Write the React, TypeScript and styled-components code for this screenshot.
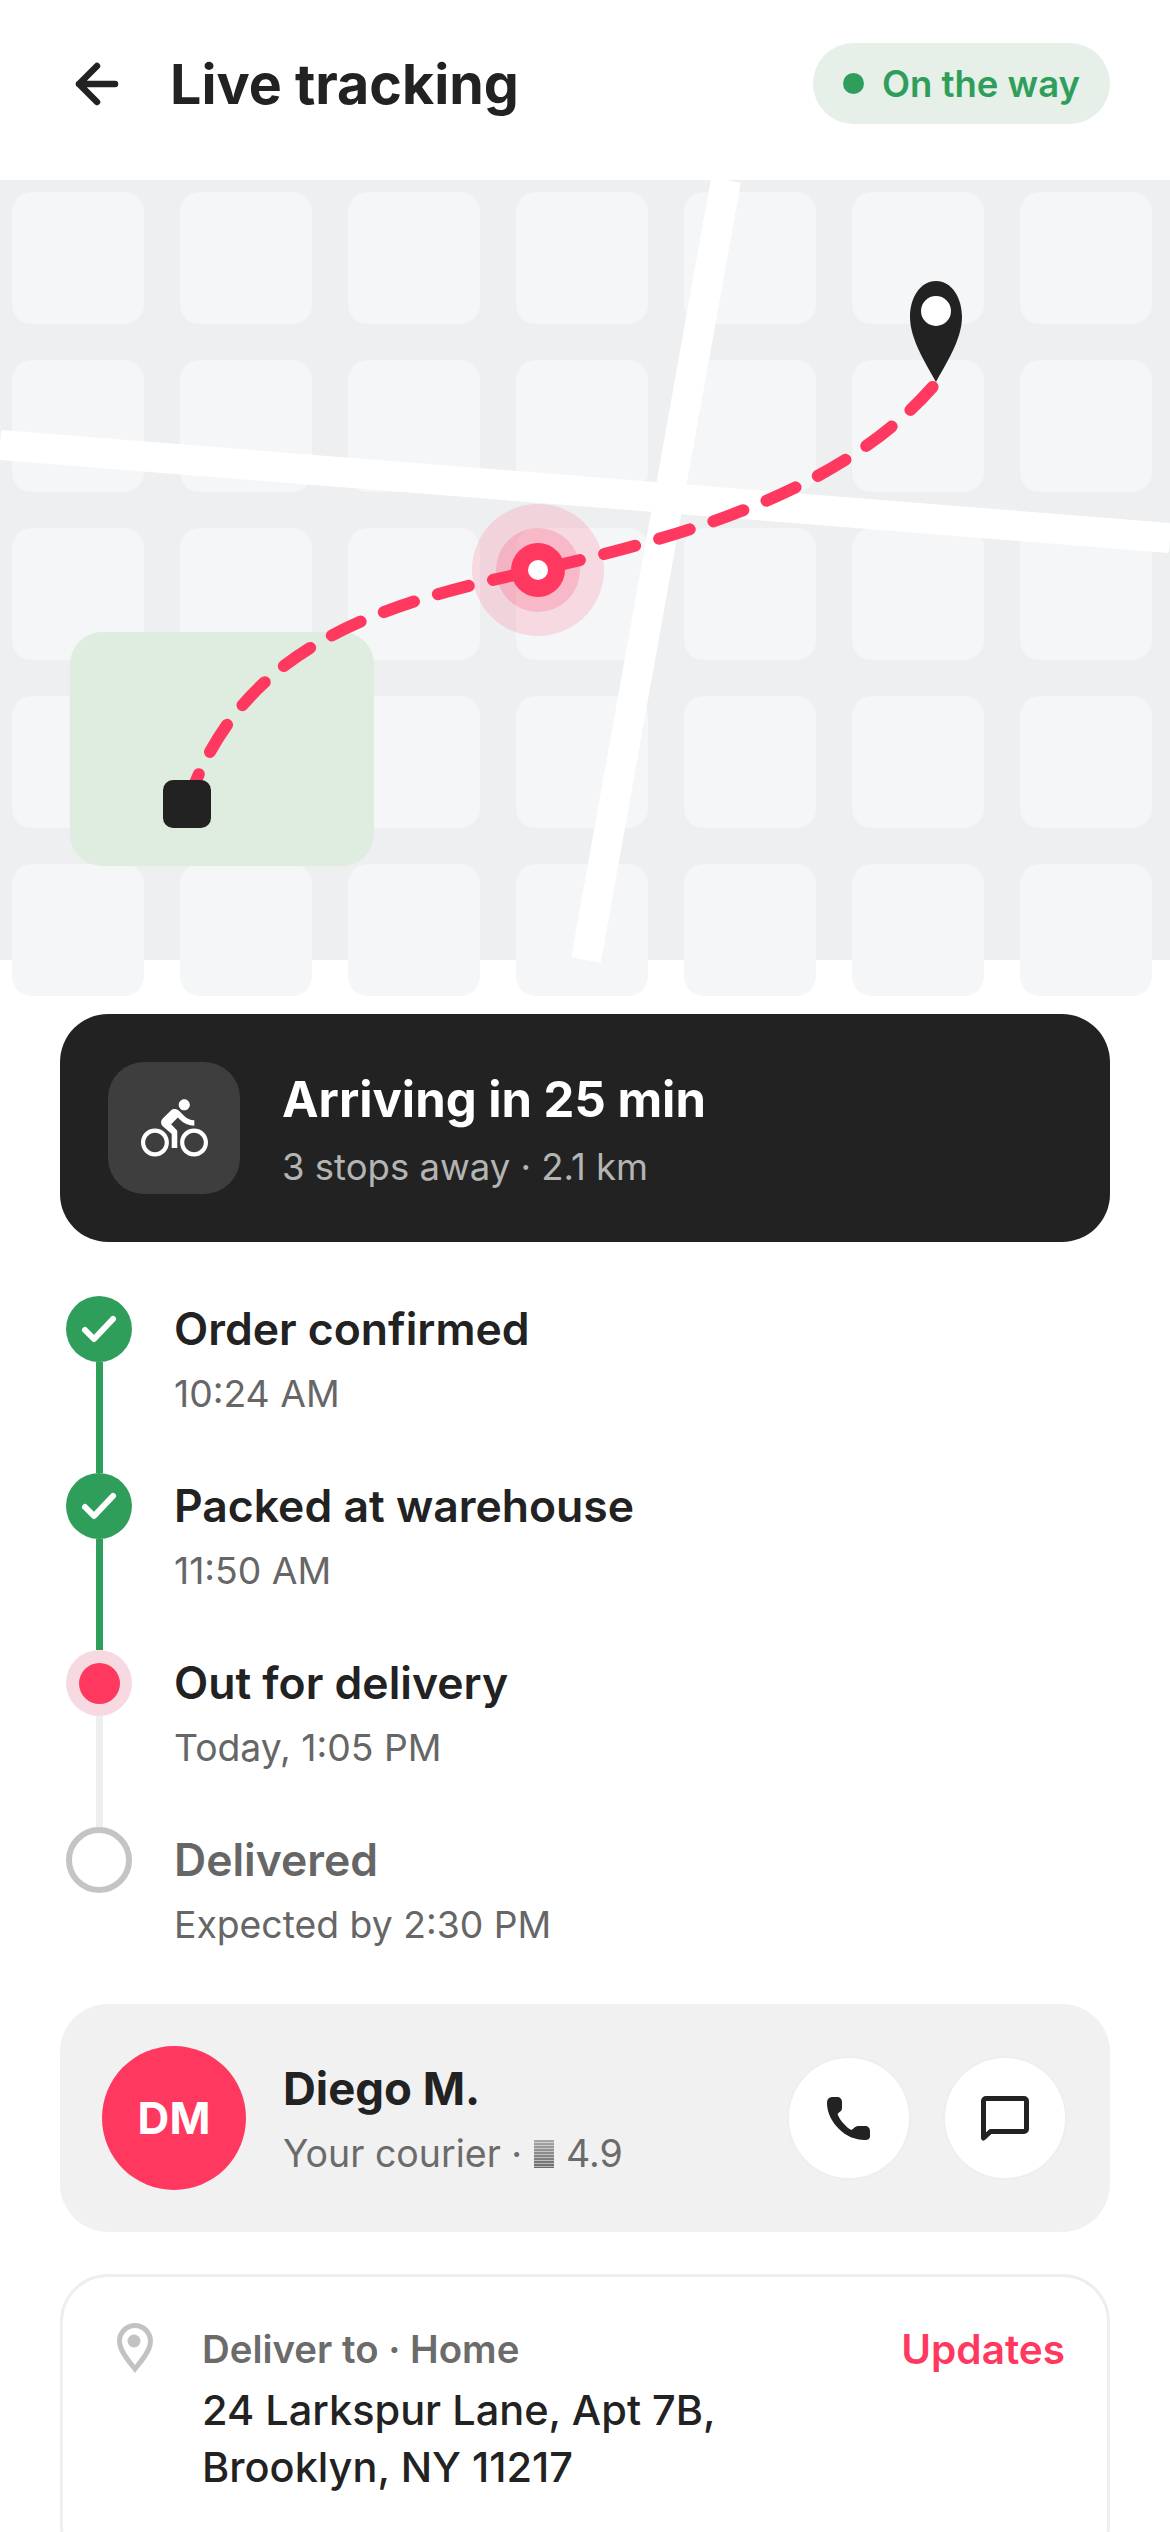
import * as React from 'react';
import styled, { createGlobalStyle } from 'styled-components';
import { MdDirectionsBike } from 'react-icons/md';

const RED = '#ff3860';
const GREEN = '#2f9e5b';
const INK = '#222222';
const FONT = 'Inter, "Liberation Sans", sans-serif';

const GlobalStyle = createGlobalStyle`
  html, body {
    margin: 0;
    padding: 0;
    background: #ffffff;
  }

  body {
    font-family: ${FONT};
    color: ${INK};
  }

  * {
    box-sizing: border-box;
  }
`;

const Screen = styled.div`
  width: 1170px;
  height: 2532px;
  overflow: hidden;
  background: #ffffff;
`;

const Header = styled.header`
  height: 180px;
  padding: 0 60px 13px 75px;
  display: flex;
  align-items: center;
  justify-content: space-between;
`;

const HeaderLeft = styled.div`
  display: flex;
  align-items: center;
  gap: 51px;
`;

const BackIcon = styled.svg`
  width: 44px;
  height: 44px;
  flex: none;
`;

const Title = styled.h1`
  margin: 0;
  font-size: 55.5px;
  font-weight: 700;
`;

const StatusPill = styled.div`
  height: 81px;
  padding: 0 30px;
  display: flex;
  align-items: center;
  gap: 18px;
  border-radius: 41px;
  background: #e6f0e9;
  color: ${GREEN};
  font-size: 36.5px;
  font-weight: 600;
`;

const StatusDot = styled.span`
  width: 21px;
  height: 21px;
  border-radius: 50%;
  background: ${GREEN};
`;

const MapArea = styled.section`
  position: relative;
  height: 780px;
  background: #eeeff1;
`;

const BlockGrid = styled.div`
  padding: 12px 0 0 12px;
  display: grid;
  grid-template-columns: repeat(7, 132px);
  grid-auto-rows: 132px;
  gap: 36px;
`;

const Block = styled.div`
  border-radius: 20px;
  background: #f5f6f8;
`;

const MapDrawing = styled.svg`
  position: absolute;
  inset: 0;
  width: 1170px;
  height: 780px;
  overflow: visible;
`;

const Content = styled.main`
  padding: 54px 60px 0;
`;

const EtaCard = styled.div`
  height: 228px;
  padding: 0 48px;
  display: flex;
  align-items: center;
  gap: 42px;
  border-radius: 48px;
  background: ${INK};
`;

const EtaIcon = styled.div`
  width: 132px;
  height: 132px;
  flex: none;
  display: flex;
  align-items: center;
  justify-content: center;
  border-radius: 36px;
  background: #3e3e3e;
  color: #ffffff;
  font-size: 67px;
`;

const EtaText = styled.div`
  padding-top: 6px;
`;

const EtaTitle = styled.div`
  font-size: 49px;
  font-weight: 700;
  line-height: 60px;
  color: #ffffff;
`;

const EtaMeta = styled.div`
  margin-top: 12px;
  font-size: 36.5px;
  line-height: 50px;
  color: #b4b4b4;
`;

const Timeline = styled.ol`
  margin: 54px 0 0;
  padding: 0;
  list-style: none;
`;

const Step = styled.li`
  height: 177px;
  display: flex;
  gap: 42px;
  padding-left: 6px;
`;

const Rail = styled.div`
  width: 66px;
  flex: none;
  display: flex;
  flex-direction: column;
  align-items: center;
`;

const Marker = styled.div<{ $state: StepState }>`
  width: 66px;
  height: 66px;
  flex: none;
  display: flex;
  align-items: center;
  justify-content: center;
  border-radius: 50%;
  background: ${(p) => (p.$state === 'done' ? GREEN : p.$state === 'current' ? '#f7d9e2' : '#ffffff')};
  border: ${(p) => (p.$state === 'todo' ? '6px solid #c4c4c4' : 'none')};
`;

const CheckIcon = styled.svg`
  width: 40px;
  height: 32px;
`;

const MarkerCore = styled.span`
  width: 41px;
  height: 41px;
  border-radius: 50%;
  background: ${RED};
`;

const RailLine = styled.div<{ $done: boolean }>`
  width: 7px;
  flex: 1;
  background: ${(p) => (p.$done ? GREEN : '#eeeeee')};
`;

const StepTitle = styled.div<{ $muted: boolean }>`
  font-size: 44.5px;
  font-weight: 600;
  line-height: 66px;
  color: ${(p) => (p.$muted ? '#666666' : INK)};
`;

const StepTime = styled.div`
  font-size: 37.3px;
  line-height: 64px;
  color: #666666;
`;

const CourierCard = styled.div`
  height: 228px;
  padding: 0 45px 0 42px;
  display: flex;
  align-items: center;
  border-radius: 48px;
  background: #f1f1f1;
`;

const Avatar = styled.div`
  width: 144px;
  height: 144px;
  flex: none;
  display: flex;
  align-items: center;
  justify-content: center;
  border-radius: 50%;
  background: ${RED};
  color: #ffffff;
  font-size: 44px;
  font-weight: 700;
`;

const CourierInfo = styled.div`
  margin-left: 37px;
  padding-top: 2px;
  flex: 1;
`;

const CourierName = styled.div`
  font-size: 45.5px;
  font-weight: 700;
  line-height: 60px;
`;

const CourierMeta = styled.div`
  margin-top: 10px;
  display: flex;
  align-items: center;
  gap: 12px;
  font-size: 37.5px;
  line-height: 50px;
  color: #6b6b6b;
`;

const RatingMark = styled.span`
  width: 20px;
  height: 28px;
  background:
    repeating-linear-gradient(to bottom, transparent 0 2px, rgba(241, 241, 241, 0.55) 2px 3px),
    linear-gradient(to bottom, #a8a8a8, #6b6b6b);
`;

const RoundActions = styled.div`
  display: flex;
  gap: 36px;
`;

const RoundButton = styled.div`
  width: 120px;
  height: 120px;
  display: flex;
  align-items: center;
  justify-content: center;
  border-radius: 50%;
  background: #ffffff;
  box-shadow: 0 0 0 2px #eeeeee;
`;

const ActionIcon = styled.svg`
  width: 48px;
  height: 45px;
`;

const AddressCard = styled.div`
  margin-top: 42px;
  height: 300px;
  padding: 41px 42px 0 54px;
  display: flex;
  gap: 49px;
  border: 3px solid #eeeeee;
  border-radius: 48px;
`;

const AddressPin = styled.svg`
  width: 36px;
  height: 50px;
  flex: none;
  margin-top: 5px;
`;

const AddressBody = styled.div`
  flex: 1;
`;

const AddressTop = styled.div`
  display: flex;
  align-items: center;
  justify-content: space-between;
  height: 62px;
`;

const AddressLabel = styled.div`
  font-size: 38.4px;
  font-weight: 600;
  color: #6b6b6b;
`;

const UpdatesLink = styled.div`
  font-size: 40.5px;
  font-weight: 600;
  color: ${RED};
`;

const AddressText = styled.div`
  margin-top: 2px;
  font-size: 41.5px;
  font-weight: 500;
  line-height: 57px;
`;

type StepState = 'done' | 'current' | 'todo';

const STEPS: { title: string; time: string; state: StepState }[] = [
  { title: 'Order confirmed', time: '10:24 AM', state: 'done' },
  { title: 'Packed at warehouse', time: '11:50 AM', state: 'done' },
  { title: 'Out for delivery', time: 'Today, 1:05 PM', state: 'current' },
  { title: 'Delivered', time: 'Expected by 2:30 PM', state: 'todo' },
];

const BLOCK_COUNT = 35;

const CityMap = () => (
  <MapArea>
    <BlockGrid>
      {Array.from({ length: BLOCK_COUNT }, (_, i) => <Block key={i} />)}
    </BlockGrid>
    <MapDrawing viewBox="0 0 1170 780">
      <rect x="70" y="452" width="304" height="234" rx="32" fill="#deeddf" />
      <line x1="726" y1="0" x2="586" y2="780" stroke="#ffffff" strokeWidth="30" />
      <line x1="0" y1="265" x2="1170" y2="358" stroke="#ffffff" strokeWidth="30" />
      <path
        d="M187 624 C 240 470, 370 425, 538 390 C 690 355, 845 310, 936 203"
        fill="none"
        stroke={RED}
        strokeWidth="12"
        strokeLinecap="round"
        strokeDasharray="32 25"
      />
      <rect x="163" y="600" width="48" height="48" rx="10" fill={INK} />
      <circle cx="538" cy="390" r="66" fill={RED} fillOpacity="0.15" />
      <circle cx="538" cy="390" r="42" fill={RED} fillOpacity="0.2" />
      <circle cx="538" cy="390" r="27" fill={RED} />
      <circle cx="538" cy="390" r="10" fill="#ffffff" />
      <path
        d="M936 101 C 952 101 962 118 962 137 C 962 160 945 185 936 202 C 927 185 910 160 910 137 C 910 118 920 101 936 101 Z"
        fill={INK}
      />
      <circle cx="936" cy="131" r="15" fill="#ffffff" />
    </MapDrawing>
  </MapArea>
);

export default function App() {
  return (
    <Screen>
      <GlobalStyle />
      <Header>
        <HeaderLeft>
          <BackIcon viewBox="0 0 44 44">
            <path
              d="M4 22 H40 M4 22 L22 4 M4 22 L22 40"
              fill="none"
              stroke={INK}
              strokeWidth="6.5"
              strokeLinecap="round"
              strokeLinejoin="round"
            />
          </BackIcon>
          <Title>Live tracking</Title>
        </HeaderLeft>
        <StatusPill>
          <StatusDot />
          On the way
        </StatusPill>
      </Header>

      <CityMap />

      <Content>
        <EtaCard>
          <EtaIcon><MdDirectionsBike /></EtaIcon>
          <EtaText>
            <EtaTitle>Arriving in 25 min</EtaTitle>
            <EtaMeta>3 stops away · 2.1 km</EtaMeta>
          </EtaText>
        </EtaCard>

        <Timeline>
          {STEPS.map((step, i) => (
            <Step key={step.title}>
              <Rail>
                <Marker $state={step.state}>
                  {step.state === 'done' && (
                    <CheckIcon viewBox="0 0 40 32">
                      <path
                        d="M6 17 L15 26 L34 6"
                        fill="none"
                        stroke="#ffffff"
                        strokeWidth="6"
                        strokeLinecap="round"
                        strokeLinejoin="round"
                      />
                    </CheckIcon>
                  )}
                  {step.state === 'current' && <MarkerCore />}
                </Marker>
                {i < STEPS.length - 1 && <RailLine $done={step.state === 'done'} />}
              </Rail>
              <div>
                <StepTitle $muted={step.state === 'todo'}>{step.title}</StepTitle>
                <StepTime>{step.time}</StepTime>
              </div>
            </Step>
          ))}
        </Timeline>

        <CourierCard>
          <Avatar>DM</Avatar>
          <CourierInfo>
            <CourierName>Diego M.</CourierName>
            <CourierMeta>
              Your courier · <RatingMark /> 4.9
            </CourierMeta>
          </CourierInfo>
          <RoundActions>
            <RoundButton>
              <ActionIcon viewBox="0 0 48 45">
                <path
                  d="M2 7 C2 3 4 1 8 1 H12 C15 1 17 3 17 6 V12 C17 14 16 15 14 16.5 L12.5 18 C14 22 16 25 18.5 27.5 C21 30 23 32.5 26.5 34 L29 32 C30.5 30.5 32 30 34 30 H40 C43 30 45 32 45 35 V40 C45 43 43 44 40 44 C30 44 21 40 14 33 C7 26 2 17 2 7 Z"
                  fill={INK}
                />
              </ActionIcon>
            </RoundButton>
            <RoundButton>
              <ActionIcon viewBox="0 0 48 45">
                <path
                  d="M2.5 42 V5 a2.5 2.5 0 0 1 2.5 -2.5 H43 a2.5 2.5 0 0 1 2.5 2.5 V33 a2.5 2.5 0 0 1 -2.5 2.5 H9.5 Z"
                  fill="none"
                  stroke={INK}
                  strokeWidth="5"
                  strokeLinejoin="round"
                />
              </ActionIcon>
            </RoundButton>
          </RoundActions>
        </CourierCard>

        <AddressCard>
          <AddressPin viewBox="0 0 36 50">
            <path
              fillRule="evenodd"
              d="M18 0 C8 0 0 8 0 18 C0 30 12 42 18 50 C24 42 36 30 36 18 C36 8 28 0 18 0 Z M18 5 C11 5 5 11 5 18 C5 26 13 35 18 42 C23 35 31 26 31 18 C31 11 25 5 18 5 Z"
              fill="#c2c2c2"
            />
            <circle cx="17" cy="18" r="6.5" fill="#c2c2c2" />
          </AddressPin>
          <AddressBody>
            <AddressTop>
              <AddressLabel>Deliver to · Home</AddressLabel>
              <UpdatesLink>Updates</UpdatesLink>
            </AddressTop>
            <AddressText>
              24 Larkspur Lane, Apt 7B,
              <br />
              Brooklyn, NY 11217
            </AddressText>
          </AddressBody>
        </AddressCard>
      </Content>
    </Screen>
  );
}
